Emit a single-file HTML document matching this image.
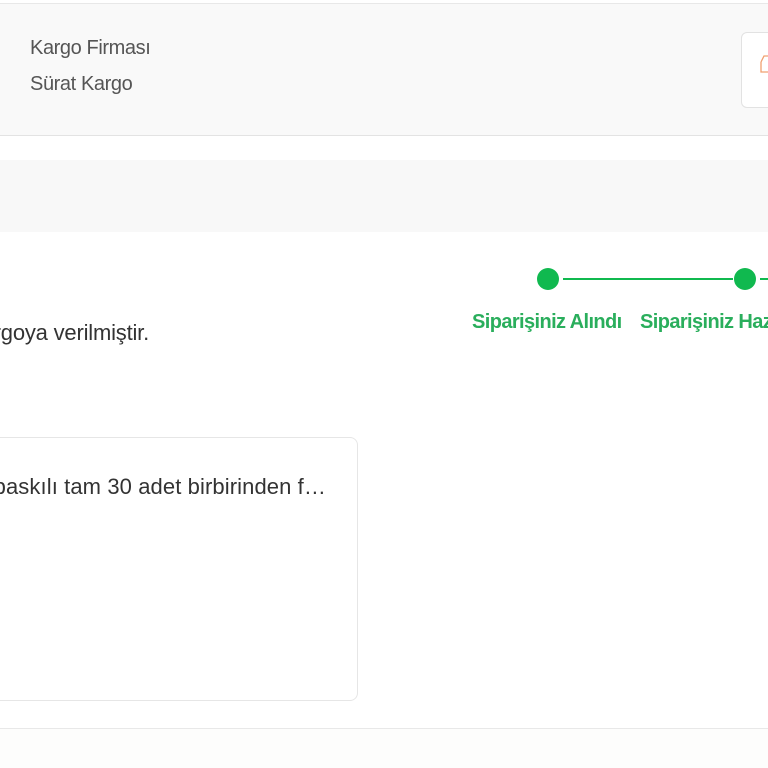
<!DOCTYPE html>
<html><head><meta charset="utf-8"><style>
html,body{margin:0;padding:0;width:768px;height:768px;overflow:hidden;background:#fff;font-family:"Liberation Sans",sans-serif}
#w{position:relative;width:768px;height:768px;overflow:hidden}
.a{position:absolute;white-space:nowrap}
</style></head><body><div id="w">
<div class="a" style="left:0;top:3px;width:768px;height:1px;background:#e8e8e8"></div>
<div class="a" style="left:0;top:4px;width:768px;height:131px;background:#f9f9f9;border-bottom:1px solid #e3e3e3"></div>
<div class="a" style="left:30px;top:37px;font-size:20px;color:#555;letter-spacing:-0.4px">Kargo Firması</div>
<div class="a" style="left:30px;top:73px;font-size:20px;color:#555;letter-spacing:-0.4px">Sürat Kargo</div>
<div class="a" style="left:741px;top:32px;width:60px;height:74px;background:#fff;border:1px solid #e2e2e2;border-radius:6px"></div>
<svg class="a" style="left:757px;top:52px" width="11" height="24" viewBox="0 0 11 24"><path d="M4 10 L7 4 L11 4 M4 10 V20 H11" fill="none" stroke="#f0a070" stroke-width="1.3"/></svg>
<div class="a" style="left:0;top:160px;width:768px;height:72px;background:#f8f8f8"></div>
<div class="a" style="left:537px;top:268px;width:22px;height:22px;border-radius:50%;background:#10b94f"></div>
<div class="a" style="left:563px;top:278px;width:170px;height:2px;background:#10b94f"></div>
<div class="a" style="left:734px;top:268px;width:22px;height:22px;border-radius:50%;background:#10b94f"></div>
<div class="a" style="left:760px;top:278px;width:8px;height:2px;background:#10b94f"></div>
<div class="a" style="left:472px;top:311px;font-size:20px;font-weight:bold;color:#2aae5c;letter-spacing:-0.6px">Siparişiniz Alındı</div>
<div class="a" style="left:640px;top:311px;font-size:20px;font-weight:bold;color:#2aae5c;letter-spacing:-0.6px">Siparişiniz Hazırlanıyor</div>
<div class="a" style="right:619px;top:320px;font-size:22px;color:#333;letter-spacing:-0.2px">Siparişiniz kargoya verilmiştir.</div>
<div class="a" style="left:-10px;top:437px;width:366px;height:262px;border:1px solid #e6e6e6;border-radius:8px;background:#fff"></div>
<div class="a" style="right:442px;top:474px;font-size:22px;color:#333;letter-spacing:0.1px">Ürün baskılı tam 30 adet birbirinden f…</div>
<div class="a" style="left:0;top:728px;width:768px;height:1px;background:#e8e8e8"></div>
<div class="a" style="left:0;top:729px;width:768px;height:39px;background:#fdfdfc"></div>
</div></body></html>
